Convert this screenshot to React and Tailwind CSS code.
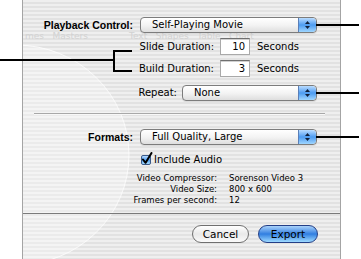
import React from 'react';

const stripes =
  'bg-[image:repeating-linear-gradient(to_bottom,#efefef_0px,#efefef_2px,#e2e2e2_2px,#e2e2e2_4px)]';

const PopupArrows = () => (
  <div className="w-[18px] h-full rounded-r-[4px] bg-linear-to-b from-[#b9dcff] via-[#4c9bf0] to-[#9fd6ff] border-l border-[#5a7fb8] flex flex-col items-center justify-center gap-[2px]">
    <svg width="5" height="3" viewBox="0 0 5 3"><path d="M0 3 L2.5 0 L5 3 Z" fill="#10203a" /></svg>
    <svg width="5" height="3" viewBox="0 0 5 3"><path d="M0 0 L2.5 3 L5 0 Z" fill="#10203a" /></svg>
  </div>
);

const Popup = ({ label, className }) => (
  <div className={`h-[16px] flex rounded-[4px] border border-[#7c7c7c] bg-linear-to-b from-white via-[#f4f4f4] to-[#dedede] shadow-[0_1px_0_rgba(0,0,0,0.08)] ${className}`}>
    <div className="flex-1 flex items-center pl-[11px] text-[10px] text-black leading-none">{label}</div>
    <PopupArrows />
  </div>
);

const Field = ({ value }) => (
  <div className="w-[30px] h-[17px] bg-white border border-[#a9a9a9] border-t-[#6f6f6f] shadow-[inset_0_1px_0_#d0d0d0] flex items-center justify-end pr-[4px] text-[10px] leading-none">
    {value}
  </div>
);

const InfoRow = ({ label, value }) => (
  <div className="h-[11px] flex items-center text-[8.5px] leading-none text-black">
    <div className="w-[194px] text-right">{label}</div>
    <div className="ml-[12px]">{value}</div>
  </div>
);

const Line = ({ className }) => <div className={`absolute bg-black ${className}`} />;

export default function App() {
  return (
    <div className="relative w-[361px] h-[259px] bg-white overflow-hidden font-['DejaVu_Sans',sans-serif]">
      <div className={`relative ml-[22px] w-[319px] h-[259px] border-l border-r border-[#a4a4a4] ${stripes}`}>
        {/* faint sheet circle */}
        <svg className="absolute left-0 top-0" width="317" height="259">
          <ellipse cx="-7" cy="155" rx="113" ry="110" fill="rgba(255,255,255,0.3)" stroke="rgba(255,255,255,0.75)" strokeWidth="1" />
        </svg>
        {/* ghost toolbar labels bleeding through */}
        <div className="absolute left-[2px] top-[32px] text-[9px] text-[#d2d2d2] leading-none whitespace-nowrap">mes&nbsp;&nbsp;&nbsp;Masters</div>
        <div className="absolute left-[106px] top-[32px] text-[9px] text-[#d2d2d2] leading-none whitespace-nowrap">Text&nbsp;&nbsp;&nbsp;Shapes&nbsp;&nbsp;&nbsp;Table&nbsp;&nbsp;&nbsp;Chart</div>

        <div className="relative flex flex-col">
          {/* Playback control */}
          <div className="mt-[17px] h-[16px] flex items-center">
            <div className="w-[110px] text-right font-['Liberation_Sans',sans-serif] font-bold text-[10.5px] leading-none">Playback Control:</div>
            <Popup label="Self-Playing Movie" className="ml-[7px] w-[177px]" />
          </div>

          {/* Slide duration */}
          <div className="mt-[5px] h-[17px] flex items-center text-[10px] leading-none">
            <div className="w-[191px] text-right">Slide Duration:</div>
            <div className="ml-[6px]"><Field value="10" /></div>
            <div className="ml-[7px]">Seconds</div>
          </div>

          {/* Build duration */}
          <div className="mt-[5px] h-[17px] flex items-center text-[10px] leading-none">
            <div className="w-[191px] text-right">Build Duration:</div>
            <div className="ml-[6px]"><Field value="3" /></div>
            <div className="ml-[7px]">Seconds</div>
          </div>

          {/* Repeat */}
          <div className="mt-[8px] h-[16px] flex items-center text-[10px] leading-none">
            <div className="w-[154px] text-right">Repeat:</div>
            <Popup label="None" className="ml-[5px] w-[135px]" />
          </div>

          <div className="mt-[12px] ml-[11px] w-[291px] h-px bg-[#a8a8a8] shadow-[0_1px_0_#f8f8f8]" />

          {/* Formats */}
          <div className="mt-[15px] h-[16px] flex items-center">
            <div className="w-[110px] text-right font-['Liberation_Sans',sans-serif] font-bold text-[10.5px] leading-none">Formats:</div>
            <Popup label="Full Quality, Large" className="ml-[7px] w-[177px]" />
          </div>

          {/* Include audio */}
          <div className="mt-[7px] h-[16px] flex items-center text-[10px] leading-none">
            <div className="ml-[118px] w-[10px] h-[10px] rounded-[2px] border border-[#3a5a8a] bg-linear-to-b from-[#b8dcff] via-[#4c9bf0] to-[#a6dcff] relative">
              <svg className="absolute -left-[1px] -top-[4px]" width="12" height="13" viewBox="0 0 12 13">
                <path d="M2 7.5 L4.6 10.8 L10.5 1" fill="none" stroke="#000" strokeWidth="2" strokeLinecap="round" strokeLinejoin="round" />
              </svg>
            </div>
            <div className="ml-[3px]">Include Audio</div>
          </div>

          {/* Info */}
          <div className="mt-[5px]">
            <InfoRow label="Video Compressor:" value="Sorenson Video 3" />
            <InfoRow label="Video Size:" value="800 x 600" />
            <InfoRow label="Frames per second:" value="12" />
          </div>

          <div className="mt-[7px] h-px bg-[#7a7a7a]" />

          {/* Buttons */}
          <div className="mt-[11px] h-[18px] flex text-[10.5px] leading-none">
            <div className="ml-[169px] w-[57px] h-[18px] rounded-full border border-[#6f6f6f] bg-linear-to-b from-white via-[#e9e9e9] to-[#fafafa] flex items-center justify-center">
              Cancel
            </div>
            <div className="ml-[9px] w-[60px] h-[18px] rounded-full border border-[#233e86] bg-linear-to-b from-[#a9d2fa] via-[#2f7ee0] to-[#9edaff] flex items-center justify-center">
              Export
            </div>
          </div>
        </div>
      </div>

      {/* callout lines */}
      <Line className="left-[316px] top-[24px] w-[43px] h-[2px]" />
      <Line className="left-[316px] top-[92px] w-[43px] h-[2px]" />
      <Line className="left-[316px] top-[136px] w-[43px] h-[2px]" />
      <Line className="left-0 top-[59px] w-[115px] h-[2px]" />
      <Line className="left-[113px] top-[50px] w-[2px] h-[22px]" />
      <Line className="left-[113px] top-[50px] w-[19px] h-[2px]" />
      <Line className="left-[113px] top-[70px] w-[19px] h-[2px]" />
    </div>
  );
}
